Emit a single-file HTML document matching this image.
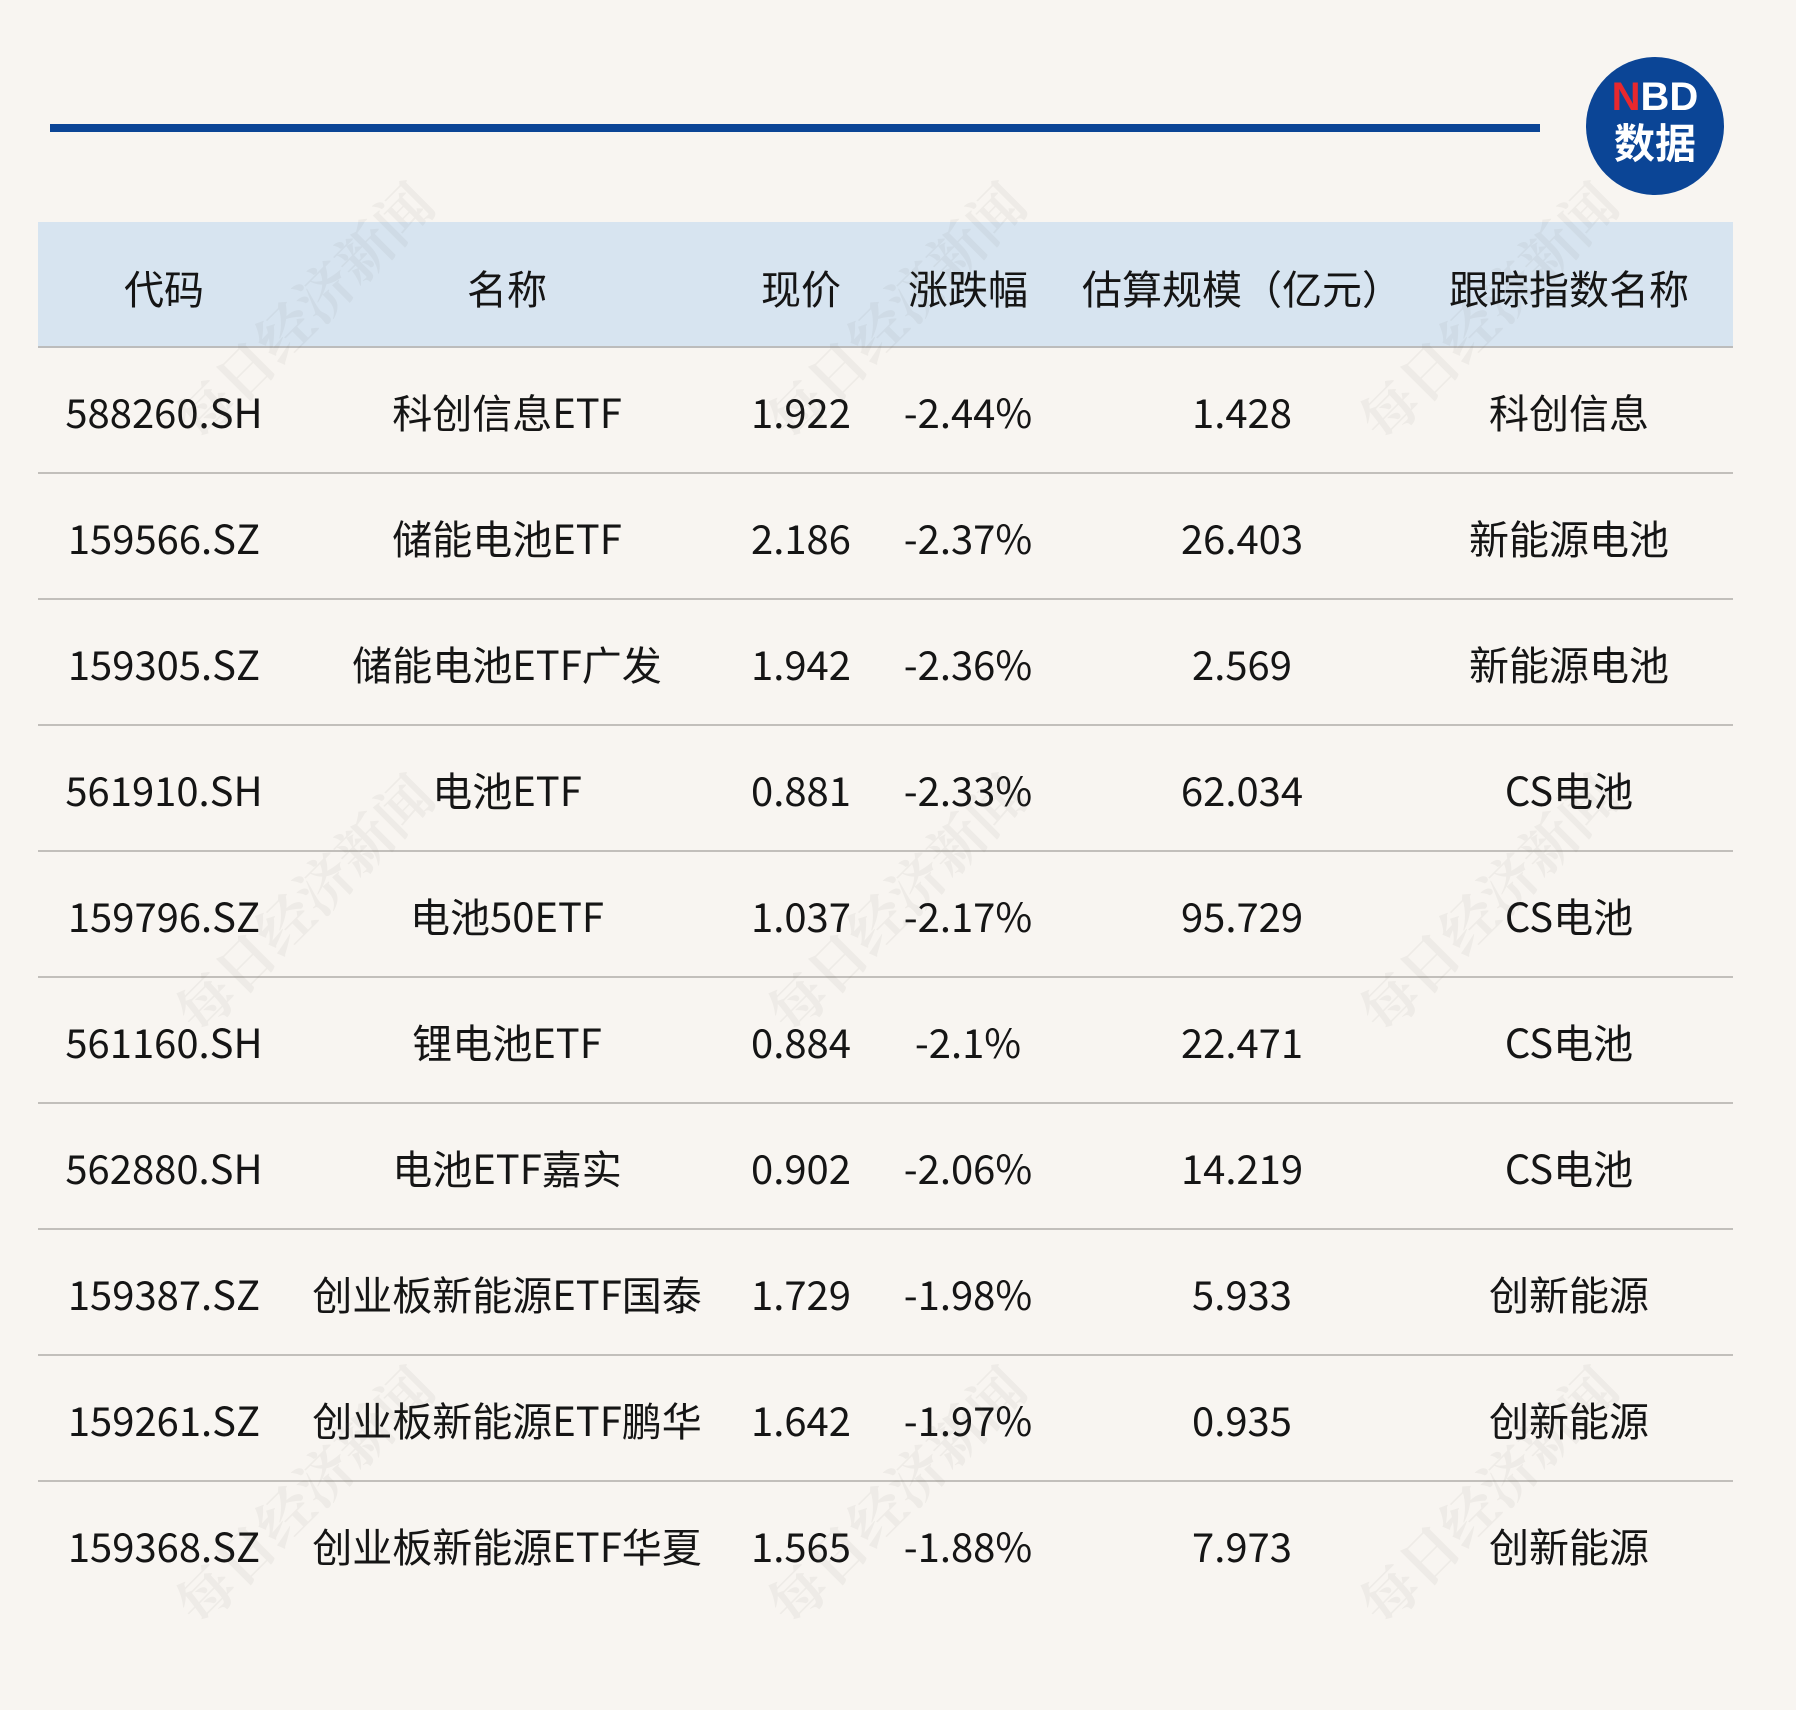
<!DOCTYPE html>
<html><head><meta charset="utf-8"><style>
body{margin:0;width:1796px;height:1710px;background:#f8f5f1;position:relative;overflow:hidden;font-family:"Noto Sans CJK SC","Liberation Sans",sans-serif;color:#151515}
.bar{position:absolute;left:50px;top:124px;width:1490px;height:8px;background:#0b4596}
.logo{position:absolute;left:1586px;top:57px;width:138px;height:138px;border-radius:50%;background:#0b4596;color:#fff;text-align:center;font-weight:bold}
.logo .a{position:absolute;top:20px;left:0;width:100%;font-size:40px;line-height:40px;font-family:"Liberation Sans",sans-serif}
.logo .b{position:absolute;top:60px;left:0;width:100%;font-size:41px;line-height:46px}
.head{position:absolute;left:38px;top:222px;width:1695px;height:124px;background:#d7e4f0;border-bottom:2px solid #bcbcbc}
.row{position:absolute;left:38px;width:1695px;height:126px}
.line{border-bottom:2px solid #c2bfbb}
.c{position:absolute;top:3px;text-align:center;font-size:40px;white-space:nowrap;transform:translateX(-50%)}
.head .c{line-height:124px}
.row .c{line-height:124px}
.wm{position:absolute;font-size:56px;font-weight:bold;color:rgba(120,110,100,0.07);transform:rotate(-45deg);white-space:nowrap;font-family:"Noto Serif CJK SC",serif}
</style></head><body>
<div class="bar"></div>
<div class="logo"><div class="a"><span style="color:#e8282e">N</span>BD</div><div class="b">数据</div></div>
<div class="head">
<div class="c" style="left:126px">代码</div>
<div class="c" style="left:469px">名称</div>
<div class="c" style="left:763px">现价</div>
<div class="c" style="left:930px">涨跌幅</div>
<div class="c" style="left:1204px">估算规模（亿元）</div>
<div class="c" style="left:1531px">跟踪指数名称</div>
</div>
<div class="row line" style="top:346px"><div class="c" style="left:126px">588260.SH</div><div class="c" style="left:469px">科创信息ETF</div><div class="c" style="left:763px">1.922</div><div class="c" style="left:930px">-2.44%</div><div class="c" style="left:1204px">1.428</div><div class="c" style="left:1531px">科创信息</div></div>
<div class="row line" style="top:472px"><div class="c" style="left:126px">159566.SZ</div><div class="c" style="left:469px">储能电池ETF</div><div class="c" style="left:763px">2.186</div><div class="c" style="left:930px">-2.37%</div><div class="c" style="left:1204px">26.403</div><div class="c" style="left:1531px">新能源电池</div></div>
<div class="row line" style="top:598px"><div class="c" style="left:126px">159305.SZ</div><div class="c" style="left:469px">储能电池ETF广发</div><div class="c" style="left:763px">1.942</div><div class="c" style="left:930px">-2.36%</div><div class="c" style="left:1204px">2.569</div><div class="c" style="left:1531px">新能源电池</div></div>
<div class="row line" style="top:724px"><div class="c" style="left:126px">561910.SH</div><div class="c" style="left:469px">电池ETF</div><div class="c" style="left:763px">0.881</div><div class="c" style="left:930px">-2.33%</div><div class="c" style="left:1204px">62.034</div><div class="c" style="left:1531px">CS电池</div></div>
<div class="row line" style="top:850px"><div class="c" style="left:126px">159796.SZ</div><div class="c" style="left:469px">电池50ETF</div><div class="c" style="left:763px">1.037</div><div class="c" style="left:930px">-2.17%</div><div class="c" style="left:1204px">95.729</div><div class="c" style="left:1531px">CS电池</div></div>
<div class="row line" style="top:976px"><div class="c" style="left:126px">561160.SH</div><div class="c" style="left:469px">锂电池ETF</div><div class="c" style="left:763px">0.884</div><div class="c" style="left:930px">-2.1%</div><div class="c" style="left:1204px">22.471</div><div class="c" style="left:1531px">CS电池</div></div>
<div class="row line" style="top:1102px"><div class="c" style="left:126px">562880.SH</div><div class="c" style="left:469px">电池ETF嘉实</div><div class="c" style="left:763px">0.902</div><div class="c" style="left:930px">-2.06%</div><div class="c" style="left:1204px">14.219</div><div class="c" style="left:1531px">CS电池</div></div>
<div class="row line" style="top:1228px"><div class="c" style="left:126px">159387.SZ</div><div class="c" style="left:469px">创业板新能源ETF国泰</div><div class="c" style="left:763px">1.729</div><div class="c" style="left:930px">-1.98%</div><div class="c" style="left:1204px">5.933</div><div class="c" style="left:1531px">创新能源</div></div>
<div class="row line" style="top:1354px"><div class="c" style="left:126px">159261.SZ</div><div class="c" style="left:469px">创业板新能源ETF鹏华</div><div class="c" style="left:763px">1.642</div><div class="c" style="left:930px">-1.97%</div><div class="c" style="left:1204px">0.935</div><div class="c" style="left:1531px">创新能源</div></div>
<div class="row" style="top:1480px"><div class="c" style="left:126px">159368.SZ</div><div class="c" style="left:469px">创业板新能源ETF华夏</div><div class="c" style="left:763px">1.565</div><div class="c" style="left:930px">-1.88%</div><div class="c" style="left:1204px">7.973</div><div class="c" style="left:1531px">创新能源</div></div>
<div class="wm" style="left:135px;top:270px">每日经济新闻</div>
<div class="wm" style="left:727px;top:270px">每日经济新闻</div>
<div class="wm" style="left:1319px;top:270px">每日经济新闻</div>
<div class="wm" style="left:135px;top:862px">每日经济新闻</div>
<div class="wm" style="left:727px;top:862px">每日经济新闻</div>
<div class="wm" style="left:1319px;top:862px">每日经济新闻</div>
<div class="wm" style="left:135px;top:1454px">每日经济新闻</div>
<div class="wm" style="left:727px;top:1454px">每日经济新闻</div>
<div class="wm" style="left:1319px;top:1454px">每日经济新闻</div>
</body></html>
